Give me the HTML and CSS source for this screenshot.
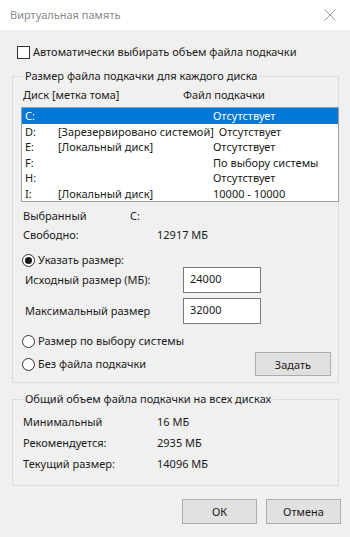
FILE: index.html
```html
<!doctype html>
<html lang="ru">
<head>
  <meta charset="UTF-8" />
  <meta name="viewport" content="width=device-width, initial-scale=1" />
  <title>Виртуальная память</title>
  <link rel="stylesheet" href="styles.css">
</head>
<body>
  <div class="titlebar">
    <span class="title">Виртуальная память</span>
    <svg class="close" width="12" height="12" viewBox="0 0 12 12">
      <path d="M0.5 0.5 L11.5 11.5 M11.5 0.5 L0.5 11.5" stroke="#9a9a9a" stroke-width="1" fill="none"/>
    </svg>
  </div>

  <div class="dialog">
    <label class="check-row">
      <span class="checkbox"></span>
      Автоматически выбирать объем файла подкачки
    </label>

    <fieldset class="group group-disks">
      <legend>Размер файла подкачки для каждого диска</legend>

      <div class="list-head">
        <span class="col-disk">Диск [метка тома]</span>
        <span class="col-file">Файл подкачки</span>
      </div>

      <div class="listbox">
        <div class="list-row selected">
          <span class="c-letter">C:</span><span class="c-label"></span><span class="c-file">Отсутствует</span>
        </div>
        <div class="list-row">
          <span class="c-letter">D:</span><span class="c-label">[Зарезервировано системой]</span><span class="c-file c-file-d">Отсутствует</span>
        </div>
        <div class="list-row">
          <span class="c-letter">E:</span><span class="c-label">[Локальный диск]</span><span class="c-file">Отсутствует</span>
        </div>
        <div class="list-row">
          <span class="c-letter">F:</span><span class="c-label"></span><span class="c-file">По выбору системы</span>
        </div>
        <div class="list-row">
          <span class="c-letter">H:</span><span class="c-label"></span><span class="c-file">Отсутствует</span>
        </div>
        <div class="list-row">
          <span class="c-letter">I:</span><span class="c-label">[Локальный диск]</span><span class="c-file">10000 - 10000</span>
        </div>
      </div>

      <div class="info-row first">
        <span class="info-name short">Выбранный</span><span>C:</span>
      </div>
      <div class="info-row">
        <span class="info-name">Свободно:</span><span>12917 МБ</span>
      </div>

      <label class="radio-row custom">
        <span class="radio checked"></span>
        Указать размер:
      </label>

      <div class="size-row">
        <span class="size-label">Исходный размер (МБ):</span>
        <span class="textbox">24000</span>
      </div>
      <div class="size-row">
        <span class="size-label">Максимальный размер</span>
        <span class="textbox">32000</span>
      </div>

      <label class="radio-row system">
        <span class="radio"></span>
        Размер по выбору системы
      </label>

      <div class="set-row">
        <label class="radio-row">
          <span class="radio"></span>
          Без файла подкачки
        </label>
        <button class="btn btn-set">Задать</button>
      </div>
    </fieldset>

    <fieldset class="group group-total">
      <legend>Общий объем файла подкачки на всех дисках</legend>
      <div class="total-row">
        <span class="info-name">Минимальный</span><span>16 МБ</span>
      </div>
      <div class="total-row">
        <span class="info-name">Рекомендуется:</span><span>2935 МБ</span>
      </div>
      <div class="total-row">
        <span class="info-name">Текущий размер:</span><span>14096 МБ</span>
      </div>
    </fieldset>

    <div class="footer-buttons">
      <button class="btn">ОК</button>
      <button class="btn">Отмена</button>
    </div>
  </div>
</body>
</html>
```

FILE: styles.css
```css
body {
  margin: 0;
  width: 350px;
  height: 537px;
  overflow: hidden;
  background: #f0f0f0;
  color: #1a1a1a;
  font-family: 'Noto Sans', 'Open Sans', sans-serif;
  font-size: 11px;
  line-height: 16px;
}
.titlebar {
  height: 30px;
  background: #fff;
  display: flex;
  align-items: center;
  justify-content: space-between;
  padding: 0 14px 0 10px;
}
.title {
  color: #8a8a8a;
}
.close {
  display: block;
}
.dialog {
  padding: 0 11px 0 12px;
}
.check-row {
  display: flex;
  align-items: center;
  gap: 3px;
  margin: 14px 0 0 5px;
  height: 16px;
}
.checkbox {
  width: 11px;
  height: 11px;
  border: 1px solid #333;
  background: #fff;
}
.group {
  margin: 8px 0 0 0;
  padding: 0 0 0 8px;
  border: 1px solid #dcdcdc;
  min-width: 0;
}
.group legend {
  padding: 0 2px;
  margin-left: 2px;
}
.group-disks {
  padding-bottom: 6px;
}
.list-head {
  display: flex;
  margin: 3px 0 0 2px;
  height: 16px;
}
.col-disk {
  width: 160px;
}
.listbox {
  margin-top: 4px;
  margin-right: -1px;
  background: #fff;
  border: 1px solid #a0a0a0;
}
.list-row {
  display: flex;
  height: 15.5px;
  line-height: 15.5px;
  padding-left: 3px;
  white-space: nowrap;
}
.list-row.selected {
  background: #0078d7;
  color: #fff;
}
.c-letter {
  flex: none;
  width: 33px;
}
.c-label {
  flex: none;
  min-width: 155px;
}
.c-file-d {
  margin-left: 5px;
}
.info-row {
  display: flex;
  height: 16px;
  margin: 3px 0 0 2px;
}
.info-row.first {
  margin-top: 6px;
}
.info-name {
  width: 134px;
}
.info-name.short {
  width: 107px;
}
.radio-row {
  display: flex;
  align-items: center;
  gap: 3px;
  height: 16px;
  margin-left: 1px;
}
.radio-row.custom {
  margin-top: 9px;
}
.radio-row.system {
  margin-top: 9px;
}
.radio {
  width: 11px;
  height: 11px;
  border: 1px solid #333;
  border-radius: 50%;
  background: #fff;
  position: relative;
}
.radio.checked::after {
  content: "";
  position: absolute;
  left: 2px;
  top: 2px;
  width: 7px;
  height: 7px;
  border-radius: 50%;
  background: #1a1a1a;
}
.size-row {
  display: flex;
  align-items: center;
  margin: 5px 0 0 4px;
}
.radio-row.custom + .size-row {
  margin-top: -1px;
}
.size-label {
  width: 158px;
}
.textbox {
  box-sizing: border-box;
  width: 78px;
  height: 26px;
  padding: 3px 0 0 6px;
  background: #fff;
  border: 1px solid #7a7a7a;
}
.set-row {
  display: flex;
  align-items: center;
  justify-content: space-between;
  margin-top: 3px;
  padding-right: 7px;
}
.btn {
  box-sizing: border-box;
  width: 75px;
  height: 24px;
  background: #e1e1e1;
  border: 1px solid #adadad;
  font-family: inherit;
  font-size: 11px;
  color: #1a1a1a;
  padding: 0;
}
.btn-set {
  width: 76px;
}
.group-total {
  margin-top: 8px;
  padding-bottom: 13px;
}
.total-row {
  display: flex;
  height: 16px;
  margin: 5px 0 0 2px;
}
.total-row:first-of-type {
  margin-top: 7px;
}
.footer-buttons {
  display: flex;
  justify-content: flex-end;
  gap: 9px;
  margin-top: 13px;
  margin-right: -2px;
}
.footer-buttons .btn {
  height: 25px;
}
```
